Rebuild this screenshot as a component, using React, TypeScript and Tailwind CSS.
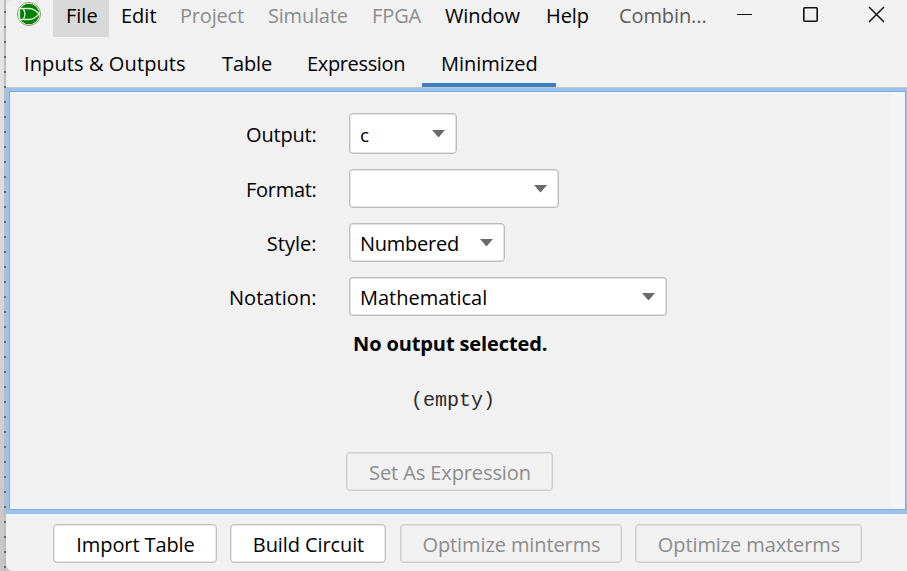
import type { ReactNode } from "react";

function Caret() {
  return (
    <svg className="shrink-0" width="13" height="8" viewBox="0 0 13 8">
      <path d="M0 0H13L6.5 7.5Z" fill="#6a6a6a" />
    </svg>
  );
}

function Combo({ className, children }: { className: string; children?: ReactNode }) {
  return (
    <div className={`flex items-center justify-between rounded-[4px] border border-[#bdbdbd] bg-white pr-[11px] pl-[10px] shadow-[inset_0_0_0_0.5px_#c8c8c8] ${className}`}>
      <span className="pt-[2px]">{children}</span>
      <Caret />
    </div>
  );
}

function Row({ label, className, children }: { label: ReactNode; className: string; children: ReactNode }) {
  return (
    <div className={`flex items-center ${className}`}>
      <div className="mr-[32.5px] flex w-[306.5px] justify-end pt-[2px]">{label}</div>
      {children}
    </div>
  );
}

function Button({ className, disabled, children }: { className: string; disabled?: boolean; children: ReactNode }) {
  return (
    <button
      disabled={disabled}
      className={`flex h-[39px] shrink-0 items-center justify-center rounded-[4px] border pt-[2px] pl-[1px] tracking-[-0.1px] whitespace-nowrap shadow-[inset_0_0_0_0.5px_#d0d0d0] ${
        disabled ? "border-[#cdcdcd] bg-[#f1f1f1] text-[#8c8c8c]" : "border-[#c0c0c0] bg-white text-black"
      } ${className}`}
    >
      {children}
    </button>
  );
}

function Logo() {
  return (
    <svg className="shrink-0" width="24" height="24" viewBox="0 0 24 24" fill="none">
      <circle cx="12" cy="12" r="11.5" fill="#f4f8f0" stroke="#7f9a6e" />
      <circle cx="12" cy="12" r="10.3" fill="#008000" />
      <path d="M2.500 6.500H12C16 6.500 19 8.500 22 12C19 15.500 16 17.500 12 17.500H2.500M6 6.500C8.500 10 8.500 14 6 17.500M2.500 6.500V17.500" stroke="#e4f4dc" strokeWidth="1.300" />
    </svg>
  );
}

export default function App() {
  return (
    <div className="flex h-[571px] w-[907px] overflow-hidden bg-linear-to-b from-[#e6e6e6] to-[#c6c6c6] font-['Open_Sans','Noto_Sans',sans-serif] text-[20px] leading-[28px] text-black">
      <div className="flex h-full w-[6px] shrink-0 justify-end">
        <div className="w-[2px] bg-[repeating-linear-gradient(to_bottom,#bcbcbc_0_11px,#686868_11px_13px,#bcbcbc_13px_15px)]" />
      </div>
      <div className="flex w-[901px] shrink-0 flex-col overflow-hidden rounded-l-[7px] bg-[#f1f1f1]">
        <div className="flex h-[37px] shrink-0 whitespace-nowrap">
          <div className="w-[47px] pt-[2px] pl-[11px]"><Logo /></div>
          <div className="w-[56px] bg-[#d9d9d9] pt-[2px] pl-[13px]">File</div>
          <div className="w-[59px] pt-[2px] pl-[12px]">Edit</div>
          <div className="w-[88px] pt-[2px] pl-[12px] tracking-[-0.2px] text-[#8c8c8c]">Project</div>
          <div className="w-[104px] pt-[2px] pl-[12px] tracking-[-0.2px] text-[#8c8c8c]">Simulate</div>
          <div className="w-[73px] pt-[2px] pl-[12px] tracking-[-0.1px] text-[#8c8c8c]">FPGA</div>
          <div className="w-[101px] pt-[2px] pl-[12px] tracking-[-0.1px]">Window</div>
          <div className="w-[84px] pt-[2px] pl-[12px] tracking-[-0.1px]">Help</div>
          <div className="w-[119px] pt-[2px] pl-[1px] tracking-[-0.1px] text-[#5c5c5c]">Combin...</div>
          <svg className="mt-[5px]" width="150" height="20" viewBox="0 0 150 20" fill="none" stroke="#111">
            <path d="M0 9.500H15" />
            <rect x="66.800" y="2.800" width="13.400" height="13.400" rx="1" strokeWidth="1.600" />
            <path d="M132 2L147 17M147 2L132 17" strokeWidth="1.500" />
          </svg>
        </div>
        <div className="flex h-[50px] shrink-0 whitespace-nowrap">
          <div className="w-[198px] pt-[13px] pl-[18px] tracking-[0.1px]">Inputs &amp; Outputs</div>
          <div className="w-[85px] pt-[13px] pl-[18px] tracking-[-0.1px]">Table</div>
          <div className="w-[133px] pt-[13px] pl-[18px] tracking-[-0.35px]">Expression</div>
          <div className="w-[134px] border-b-4 border-[#3d81c5] pt-[13px] pl-[19px]">Minimized</div>
        </div>
        <div className="h-[427px] shrink-0 border-t border-[#c4c4c4]">
          <div className="h-[426px] border-[3px] border-r border-b-[4px] border-[#97c3ec]">
            <div className="flex h-[419px] border border-[#83abcf]">
              <div className="flex w-[881px] flex-col">
                <Row className="mt-[21px] h-[41px]" label={<span className="tracking-[-0.2px]">Output:</span>}>
                  <Combo className="h-[41px] w-[108px]"><span className="text-[19px]">c</span></Combo>
                </Row>
                <Row className="mt-[15px] h-[39px]" label={<span className="tracking-[-0.3px]">Format:</span>}>
                  <Combo className="h-[39px] w-[210px]" />
                </Row>
                <Row className="mt-[15px] h-[39px]" label={<span>Style:</span>}>
                  <Combo className="h-[39px] w-[156px]"><span className="tracking-[-0.25px]">Numbered</span></Combo>
                </Row>
                <Row className="mt-[15px] h-[39px]" label={<span className="tracking-[0.05px]">Notation:</span>}>
                  <Combo className="h-[39px] w-[318px]">Mathematical</Combo>
                </Row>
                <div className="mt-[14px] ml-[343px] h-[28px] font-bold tracking-[-0.12px] whitespace-nowrap">No output selected.</div>
                <div className="mt-[29px] ml-[401px] h-[28px] font-['Liberation_Mono',monospace] text-[20px] text-[#2c2c2c]">(empty)</div>
                <Button disabled className="mt-[37px] ml-[336px] w-[207px]">Set As Expression</Button>
              </div>
              <div className="grow bg-[#f4f4f4]" />
            </div>
          </div>
        </div>
        <div className="flex pt-[10px] pl-[47px]">
          <Button className="w-[164px]">Import Table</Button>
          <Button className="ml-[13px] w-[156px]">Build Circuit</Button>
          <Button disabled className="ml-[14px] w-[222px]">Optimize minterms</Button>
          <Button disabled className="ml-[13px] w-[227px]">Optimize maxterms</Button>
        </div>
      </div>
    </div>
  );
}
